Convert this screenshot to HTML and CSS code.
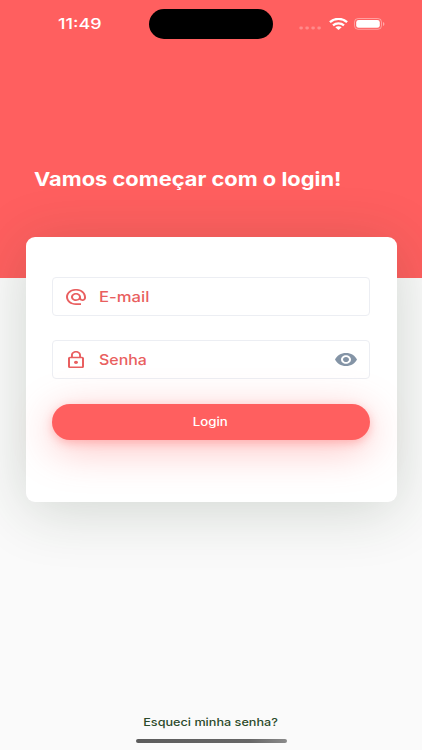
FILE: index.html
```html
<!DOCTYPE html>
<html lang="pt-BR">
<head>
  <meta charset="UTF-8">
  <meta name="viewport" content="width=device-width, initial-scale=1.0">
  <title>Login</title>
  <link rel="stylesheet" href="styles.css">
</head>
<body>
  <div class="screen">
    <header class="header">
      <div class="status-bar">
        <div class="time"><span>11:49</span></div>
        <div class="island"></div>
        <div class="status-icons">
          <svg class="signal" width="22" height="4" viewBox="0 0 22 4" fill="#fff" fill-opacity=".28">
            <rect x="0.3" y="0.5" width="3.6" height="3" rx="1.4"/>
            <rect x="6.3" y="0.5" width="3.6" height="3" rx="1.4"/>
            <rect x="12.3" y="0.5" width="3.6" height="3" rx="1.4"/>
            <rect x="18.3" y="0.5" width="3.6" height="3" rx="1.4"/>
          </svg>
          <svg class="wifi" width="19" height="12" viewBox="0 0 19 12" fill="none" stroke="#fff" stroke-width="2.3">
            <path d="M0.9 4.2C5.6-.2 13.400-.2 18.100 4.200"/>
            <path d="M4 7.400c3.100-2.700 7.900-2.700 11 0"/>
            <path d="M6.300 9.200c1.700-1.400 4.700-1.400 6.400 0L9.500 11.900z" fill="#fff" stroke="none"/>
          </svg>
          <svg class="battery" width="31" height="12" viewBox="0 0 31 12">
            <rect x="0.5" y="0.5" width="27" height="10.8" rx="3.6" fill="none" stroke="#fff" stroke-opacity=".4"/>
            <rect x="2.2" y="2" width="23.6" height="7.8" rx="2.4" fill="#fff"/>
            <path d="M29 4v4c1.9-.8 1.9-3.2 0-4z" fill="#fff" fill-opacity=".45"/>
          </svg>
        </div>
      </div>
      <h1 class="title"><span>Vamos começar com o login!</span></h1>
    </header>

    <main class="card">
      <div class="field">
        <svg class="icon-at" viewBox="2 2 20 20" preserveAspectRatio="none" fill="#e95f60">
          <path d="M12 1.95c-5.52 0-10 4.48-10 10s4.48 10 10 10h5v-2h-5c-4.34 0-8-3.66-8-8s3.66-8 8-8 8 3.66 8 8v1.43c0 .79-.71 1.57-1.5 1.57s-1.5-.78-1.5-1.57v-1.43c0-2.76-2.24-5-5-5s-5 2.24-5 5 2.24 5 5 5c1.38 0 2.64-.56 3.54-1.47.65.89 1.77 1.47 2.96 1.47 1.97 0 3.5-1.6 3.5-3.57v-1.43c0-5.52-4.48-10-10-10zm0 13c-1.66 0-3-1.34-3-3s1.34-3 3-3 3 1.34 3 3-1.34 3-3 3z"/>
        </svg>
        <div class="label email"><span>E-mail</span></div>
      </div>
      <div class="field">
        <svg class="icon-lock" viewBox="4 1 16 21" preserveAspectRatio="none" fill="#e95f60">
          <path d="M12 17c1.1 0 2-.9 2-2s-.9-2-2-2-2 .9-2 2 .9 2 2 2zm6-9h-1V6c0-2.76-2.24-5-5-5S7 3.240 7 6v2H6c-1.100 0-2 .9-2 2v10c0 1.100.9 2 2 2h12c1.100 0 2-.9 2-2V10c0-1.100-.9-2-2-2zM8.900 6c0-1.710 1.390-3.100 3.100-3.100s3.100 1.390 3.100 3.100v2H8.900V6zM18 20H6V10h12v10z"/>
        </svg>
        <div class="label password"><span>Senha</span></div>
        <svg class="icon-eye" viewBox="1 4.500 22 15" preserveAspectRatio="none" fill="#8494a6">
          <path d="M12 4.500C7 4.500 2.730 7.610 1 12c1.730 4.390 6 7.500 11 7.500s9.270-3.110 11-7.500c-1.730-4.390-6-7.500-11-7.500zM12 17c-2.760 0-5-2.240-5-5s2.240-5 5-5 5 2.240 5 5-2.240 5-5 5zm0-8c-1.660 0-3 1.340-3 3s1.340 3 3 3 3-1.340 3-3-1.340-3-3-3z"/>
        </svg>
      </div>
      <button class="login" type="button"><span>Login</span></button>
    </main>

    <footer class="footer">
      <a class="forgot"><span>Esqueci minha senha?</span></a>
      <div class="home-bar"></div>
    </footer>
  </div>
</body>
</html>
```
FILE: styles.css
```css
* {
  box-sizing: border-box;
}

body {
  margin: 0;
  background-color: #fafafa;
  font-family: Inter, "Liberation Sans", sans-serif;
}

.screen {
  display: flex;
  flex-direction: column;
  height: 750px;
  overflow: hidden;
}

/* wide lettering */
span {
  display: inline-block;
  transform: scaleX(1.15);
  transform-origin: left center;
  white-space: nowrap;
}

.header {
  flex: none;
  height: 278px;
  background-color: #ff5f5f;
  color: #fff;
}

.status-bar {
  display: flex;
  align-items: center;
  height: 48px;
}

.time {
  width: 149px;
  padding: 0 0 1px 58px;
  font-size: 15px;
  font-weight: 500;
}

.time span {
  transform: scaleX(1.2);
}

.island {
  width: 124px;
  height: 30px;
  border-radius: 15px;
  background-color: #000;
}

.status-icons {
  display: flex;
  align-items: center;
  margin-left: 26px;
}

.signal {
  margin-top: 7px;
}

.wifi {
  margin-left: 8px;
}

.battery {
  margin-left: 6px;
}

.title {
  margin: 0;
  padding: 120px 0 0 34px;
  font-size: 19px;
  line-height: 24px;
  font-weight: 700;
}

.card {
  flex: none;
  width: 371px;
  height: 265px;
  margin: -41px auto 0;
  padding: 40px 27px 0 26px;
  border-radius: 9px;
  background-color: #fff;
  box-shadow: 0 8px 60px rgba(30, 60, 30, 0.19);
}

.field {
  display: flex;
  align-items: center;
  height: 39px;
  margin-bottom: 24px;
  padding: 0 12px 0 13px;
  border: 1px solid #eceef3;
  border-radius: 4px;
}

.icon-at {
  width: 20px;
  height: 16px;
}

.icon-lock {
  width: 16px;
  height: 17px;
  margin: 0 2px;
}

.icon-eye {
  width: 22px;
  height: 13px;
  margin-left: auto;
}

.label {
  margin: -1px 0 0 13px;
  color: #e95f60;
  font-size: 14.5px;
  font-weight: 500;
}

.password span {
  transform: scaleX(1.1);
}

.login {
  display: block;
  width: 100%;
  height: 36px;
  margin-top: 25px;
  padding: 0;
  border: none;
  border-radius: 18px;
  background-color: #ff5f5f;
  box-shadow: 0 3px 10px rgba(255, 95, 95, 0.34), 0 9px 40px rgba(255, 95, 95, 0.4);
  color: #fff;
  font-family: inherit;
  font-size: 11.5px;
  font-weight: 500;
}

.login span,
.forgot span {
  transform-origin: center;
}

.footer {
  display: flex;
  flex-direction: column;
  align-items: center;
  margin-top: auto;
  padding-bottom: 7px;
}

.forgot {
  margin-bottom: 9px;
  color: #2c4a2b;
  font-size: 11px;
  line-height: 16px;
  font-weight: 500;
}

.home-bar {
  width: 151px;
  height: 4px;
  border-radius: 2px;
  background: linear-gradient(90deg, #5c5c5c, #666 75%, #8a8a8a);
}
```
